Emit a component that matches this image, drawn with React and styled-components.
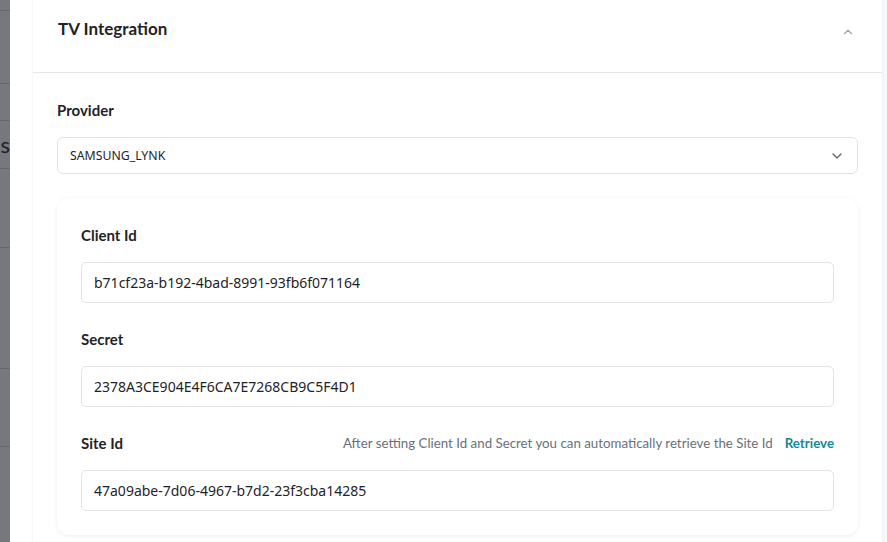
import styled, { createGlobalStyle } from "styled-components";
import { ChevronUp, ChevronDown } from "lucide-react";

const Global = createGlobalStyle`
  html, body {
    margin: 0;
    padding: 0;
    background: #fbfbfc;
    font-family: "Lato", "Noto Sans", sans-serif;
    color: #1f2328;
  }
`;

const Page = styled.div`
  display: flex;
  width: 887px;
  height: 542px;
  overflow: hidden;
`;

const Strip = styled.div`
  width: 10px;
  flex-shrink: 0;
  background: #76787d;
  display: flex;
  flex-direction: column;
  overflow: hidden;
`;

const StripRow = styled.div`
  height: ${({ h }) => h}px;
  box-sizing: border-box;
  flex-shrink: 0;
  border-bottom: 1px solid #65676b;
  display: flex;
  align-items: center;
  justify-content: flex-end;
  font-size: 22px;
  line-height: 1;
  color: #1e1f22;
  overflow: hidden;
`;

const Main = styled.div`
  flex: 1;
  padding: 0 5px 0 23px;
  background: linear-gradient(to right, #ffffff 0, #ffffff 872px, #f8f9fa 872px);
`;

const Card = styled.div`
  width: 849px;
  background: #fff;
  box-shadow: 0 0 3px rgba(0, 0, 0, 0.08);
  min-height: 560px;
`;

const Header = styled.div`
  height: 73px;
  box-sizing: border-box;
  padding: 0 27px 16px 25px;
  display: flex;
  align-items: center;
  justify-content: space-between;
  border-bottom: 1px solid #e6e7ea;
`;

const Title = styled.h2`
  margin: 0;
  font-size: 17px;
  font-weight: 700;
  color: #1f2328;
`;

const Toggle = styled.span`
  display: flex;
  margin-top: 7px;
  color: #9aa1ab;
`;

const Body = styled.div`
  padding: 24px 24px 24px;
`;

const Label = styled.div`
  font-size: 15px;
  font-weight: 700;
  line-height: 26px;
  color: #1f2328;
`;

const Select = styled.div`
  margin-top: 14px;
  height: 37px;
  box-sizing: border-box;
  border: 1px solid #e1e3e7;
  border-radius: 6px;
  display: flex;
  align-items: center;
  justify-content: space-between;
  padding: 0 12px 0 12px;
  font-family: "Noto Sans", sans-serif;
  font-size: 12.3px;
  color: #1f2328;
  svg {
    color: #5f6670;
  }
`;

const Inner = styled.div`
  margin-top: 24px;
  border-radius: 12px;
  box-shadow: 0 1px 4px rgba(0, 0, 0, 0.07);
  padding: 24px;
  display: flex;
  flex-direction: column;
  gap: 23px;
`;

const Field = styled.div`
  display: flex;
  flex-direction: column;
`;

const LabelRow = styled.div`
  display: flex;
  align-items: center;
  justify-content: space-between;
`;

const Help = styled.div`
  display: flex;
  align-items: center;
  gap: 12px;
  font-size: 13.3px;
  color: #6b7078;
`;

const Link = styled.span`
  color: #11899a;
  font-weight: 700;
`;

const Input = styled.div`
  margin-top: 14px;
  height: 41px;
  box-sizing: border-box;
  border: 1px solid #e1e3e7;
  border-radius: 5px;
  padding: 0 12px;
  display: flex;
  align-items: center;
  font-family: "Noto Sans", sans-serif;
  font-size: 14px;
  color: #1f2328;
`;

const stripRows = [11, 73, 37, 48, 79, 121, 78, 100];

export default function App() {
  return (
    <Page>
      <Global />
      <Strip>
        {stripRows.map((h, i) => (
          <StripRow key={i} h={h}>
            {i === 3 ? "s" : null}
          </StripRow>
        ))}
      </Strip>
      <Main>
        <Card>
          <Header>
            <Title>TV Integration</Title>
            <Toggle>
              <ChevronUp size={14} strokeWidth={2} />
            </Toggle>
          </Header>
          <Body>
            <Label>Provider</Label>
            <Select>
              SAMSUNG_LYNK
              <ChevronDown size={16} strokeWidth={2} />
            </Select>
            <Inner>
              <Field>
                <Label>Client Id</Label>
                <Input>b71cf23a-b192-4bad-8991-93fb6f071164</Input>
              </Field>
              <Field>
                <Label>Secret</Label>
                <Input>2378A3CE904E4F6CA7E7268CB9C5F4D1</Input>
              </Field>
              <Field>
                <LabelRow>
                  <Label>Site Id</Label>
                  <Help>
                    After setting Client Id and Secret you can automatically
                    retrieve the Site Id
                    <Link>Retrieve</Link>
                  </Help>
                </LabelRow>
                <Input>47a09abe-7d06-4967-b7d2-23f3cba14285</Input>
              </Field>
            </Inner>
          </Body>
        </Card>
      </Main>
    </Page>
  );
}
